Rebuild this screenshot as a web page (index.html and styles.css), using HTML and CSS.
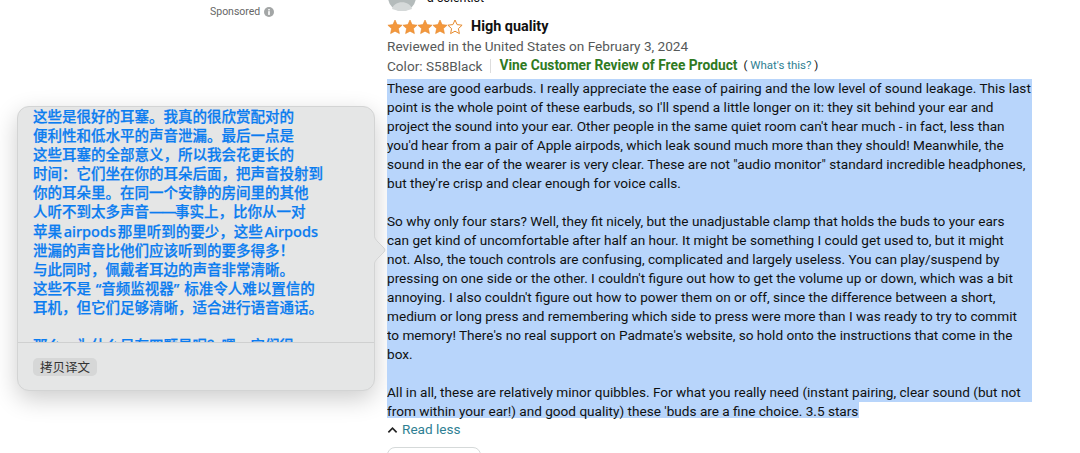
FILE: index.html
```html
<!DOCTYPE html>
<html lang="en">
<head>
<meta charset="utf-8">
<title>Review</title>
<link rel="stylesheet" href="styles.css">
</head>
<body>
<div class="page">
  <aside class="left">
    <div class="sponsored">Sponsored
      <svg class="info" viewBox="0 0 12 12" width="10" height="10"><circle cx="6" cy="6" r="6" fill="#a3a6a6"/><rect x="5" y="5" width="2" height="4.5" fill="#fff"/><rect x="5" y="2.5" width="2" height="1.6" fill="#fff"/></svg>
    </div>
    <div class="popup">
      <div class="trans">
        <div class="tl">这些是很好的耳塞。我真的很欣赏配对的</div>
        <div class="tl">便利性和低水平的声音泄漏。最后一点是</div>
        <div class="tl">这些耳塞的全部意义，所以我会花更长的</div>
        <div class="tl">时间：它们坐在你的耳朵后面，把声音投射到</div>
        <div class="tl">你的耳朵里。在同一个安静的房间里的其他</div>
        <div class="tl">人听不到太多声音<span class="dash">——</span>事实上，比你从一对</div>
        <div class="tl narrow">苹果 airpods 那里听到的要少，这些 Airpods</div>
        <div class="tl">泄漏的声音比他们应该听到的要多得多！</div>
        <div class="tl">与此同时，佩戴者耳边的声音非常清晰。</div>
        <div class="tl wide">这些不是 “音频监视器” 标准令人难以置信的</div>
        <div class="tl">耳机，但它们足够清晰，适合进行语音通话。</div>
        <div class="tl">&nbsp;</div>
        <div class="tl">那么，为什么只有四颗星呢？嗯，它们很</div>
      </div>
      <div class="foot"><span class="copy">拷贝译文</span></div>
      <svg class="arrow" viewBox="0 0 13 34" width="13" height="34"><path d="M0 0 C0 5 2 7 4 9 L10 15 Q12 17 10 19 L4 25 C2 27 0 29 0 34 Z" fill="#e5e6e6"/><path d="M0 0 C0 5 2 7 4 9 L10 15 Q12 17 10 19 L4 25 C2 27 0 29 0 34" fill="none" stroke="#d3d4d4"/></svg>
    </div>
  </aside>
  <main class="review">
    <div class="author">
      <svg class="avatar" viewBox="0 0 28 28" width="28" height="28"><circle cx="14" cy="14" r="14" fill="#b4bbbb"/><circle cx="14" cy="10" r="6" fill="#d5d9d9"/><path d="M4 26 C6 17 22 17 24 26 L14 29Z" fill="#d5d9d9"/></svg>
      <span class="name">a scientist</span>
    </div>
    <div class="title-row">
      <svg class="stars" viewBox="0 0 76 16" width="76" height="16">
        <g fill="#f3973c" stroke="#e58a2e" stroke-width=".6">
          <path d="M8 1l2.1 4.6 5 .6-3.7 3.4 1 5L8 12.2 3.6 14.6l1-5L.9 6.2l5-.6z"/>
          <path transform="translate(15)" d="M8 1l2.1 4.6 5 .6-3.7 3.4 1 5L8 12.2 3.6 14.6l1-5L.9 6.2l5-.6z"/>
          <path transform="translate(30)" d="M8 1l2.1 4.6 5 .6-3.7 3.4 1 5L8 12.2 3.6 14.6l1-5L.9 6.2l5-.6z"/>
          <path transform="translate(45)" d="M8 1l2.1 4.6 5 .6-3.7 3.4 1 5L8 12.2 3.6 14.6l1-5L.9 6.2l5-.6z"/>
          <path transform="translate(60)" fill="#fff" stroke-width="1" d="M8 1l2.1 4.6 5 .6-3.7 3.4 1 5L8 12.2 3.6 14.6l1-5L.9 6.2l5-.6z"/>
        </g>
      </svg>
      <strong class="title">High quality</strong>
    </div>
    <div class="meta">Reviewed in the United States on February 3, 2024</div>
    <div class="meta badges"><span class="color">Color: S58Black</span><span class="vine">Vine Customer Review of Free Product</span><span class="whats">( <a>What's this?</a> )</span></div>
    <div class="body">
      <div class="line">These are good earbuds. I really appreciate the ease of pairing and the low level of sound leakage. This last</div>
      <div class="line">point is the whole point of these earbuds, so I'll spend a little longer on it: they sit behind your ear and</div>
      <div class="line">project the sound into your ear. Other people in the same quiet room can't hear much - in fact, less than</div>
      <div class="line">you'd hear from a pair of Apple airpods, which leak sound much more than they should! Meanwhile, the</div>
      <div class="line">sound in the ear of the wearer is very clear. These are not "audio monitor" standard incredible headphones,</div>
      <div class="line">but they're crisp and clear enough for voice calls.</div>
      <div class="line">&nbsp;</div>
      <div class="line">So why only four stars? Well, they fit nicely, but the unadjustable clamp that holds the buds to your ears</div>
      <div class="line">can get kind of uncomfortable after half an hour. It might be something I could get used to, but it might</div>
      <div class="line">not. Also, the touch controls are confusing, complicated and largely useless. You can play/suspend by</div>
      <div class="line">pressing on one side or the other. I couldn't figure out how to get the volume up or down, which was a bit</div>
      <div class="line">annoying. I also couldn't figure out how to power them on or off, since the difference between a short,</div>
      <div class="line">medium or long press and remembering which side to press were more than I was ready to try to commit</div>
      <div class="line">to memory! There's no real support on Padmate's website, so hold onto the instructions that come in the</div>
      <div class="line">box.</div>
      <div class="line">&nbsp;</div>
      <div class="line">All in all, these are relatively minor quibbles. For what you really need (instant pairing, clear sound (but not</div>
      <div class="line last">from within your ear!) and good quality) these 'buds are a fine choice. 3.5 stars</div>
    </div>
    <div class="less"><svg viewBox="0 0 12 8" width="11" height="8"><path d="M1.5 6.5 L6 2 L10.5 6.5" fill="none" stroke="#222" stroke-width="1.8"/></svg><a>Read less</a></div>
    <div class="helpful"></div>
  </main>
</div>
</body>
</html>
```
FILE: styles.css
```css
html, body { margin: 0; padding: 0; background: #fff; }
body { width: 1080px; height: 453px; overflow: hidden; font-family: Roboto, "Noto Sans CJK SC", sans-serif; color: #111; }
.page { display: flex; height: 453px; }
.left { width: 387px; flex: none; position: relative; }
.sponsored { position: absolute; left: 210px; top: 5px; font-size: 10.5px; line-height: 14px; color: #666; display: flex; align-items: center; gap: 4px; }
.popup { position: absolute; left: 17px; top: 106px; width: 358px; height: 285px; box-sizing: border-box; background: #e5e6e6; border: 1px solid #d3d4d4; border-radius: 12px; box-shadow: 0 8px 24px rgba(0,0,0,.2); display: flex; flex-direction: column; }
.trans { flex: none; box-sizing: border-box; height: 236px; overflow: hidden; padding: 0 0 0 15px; color: #0a7cf0; font-size: 14.5px; font-weight: 500; font-family: "Noto Sans", "Noto Sans CJK SC", sans-serif; border-bottom: 1px solid #cfd0d0; white-space: nowrap; -webkit-text-stroke: .25px #0a7cf0; }
.tl { height: 19.1px; line-height: 19.1px; }
.wide { word-spacing: 1px; }
.narrow { word-spacing: -2px; }
.dash { letter-spacing: -1.5px; }
.foot { padding: 14px 15px; }
.copy { display: inline-block; background: #d6d7d7; border-radius: 5px; padding: 0 7px; font-size: 12.5px; line-height: 18px; color: #333; font-family: "Noto Sans CJK SC", sans-serif; }
.arrow { position: absolute; left: 356px; top: 126px; }
.review { flex: 1; position: relative; height: 453px; overflow: hidden; }
.author { display: flex; align-items: flex-end; gap: 11px; height: 11px; }
.avatar { flex: none; margin-left: 1px; }
.name { font-size: 12.5px; line-height: 14px; margin-bottom: 6px; color: #111; }
.title-row { display: flex; align-items: center; gap: 8px; height: 21px; margin-top: 5px; }
.title { font-size: 14.4px; font-weight: 700; }
.meta { font-size: 13.6px; line-height: 19px; color: #565959; }
.badges { display: flex; align-items: center; }
.color { padding-right: 8px; border-right: 1px solid #ddd; line-height: 14px; margin-right: 8px; }
.vine { color: #2f7a1f; font-weight: 700; font-size: 13.75px; margin-right: 6px; }
.whats { font-size: 11.5px; color: #111; }
.whats a { color: #2f7f93; }
.body { width: 645px; font-size: 13.6px; line-height: 19px; color: #0f1111; margin-top: 4px; white-space: nowrap; }
.line { background: #b8d5fb; height: 19px; }
.line.last { width: 472px; height: 16px; }
.less { display: flex; align-items: center; gap: 4px; height: 19px; font-size: 13.6px; line-height: 19px; margin-top: 2px; }
.less a { color: #2f7f93; }
.helpful { width: 94px; height: 20px; margin-top: 8px; border: 1px solid #d5d9d9; border-radius: 8px; box-sizing: border-box; }
```
